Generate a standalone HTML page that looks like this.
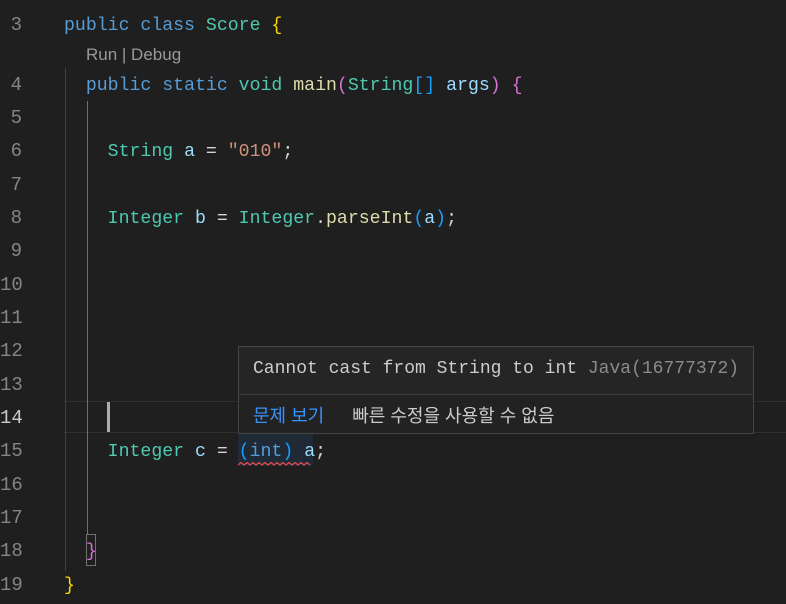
<!DOCTYPE html>
<html><head><meta charset="utf-8"><style>
body{margin:0;width:786px;height:604px;background:#1f1f1f;overflow:hidden;position:relative;font-family:"Liberation Mono","DejaVu Sans Mono",monospace;font-size:18.2px;color:#d4d4d4}
.ln{position:absolute;left:0;width:22px;text-align:right;color:#858585;font-size:19px;margin-top:3px}
.ln.cur{color:#cccccc}
.code{position:absolute;left:64px;white-space:pre;line-height:33px;margin-top:3px}
.k{color:#569cd6}.t{color:#4ec9b0}.f{color:#dcdcaa}.v{color:#9cdcfe}.s{color:#ce9178}.y{color:#ffd700}.p{color:#da70d6}.b{color:#179fff}
.g{position:absolute;width:1px;background:#404040}
</style></head><body>
<div style="position:absolute;left:64px;right:0;top:401px;height:30px;border-top:1px solid #2f2f2f;border-bottom:1px solid #2f2f2f"></div>
<div class="g" style="left:65px;top:68px;height:503px"></div>
<div class="g" style="left:87px;top:101px;height:434px;background:#707070"></div>
<div style="position:absolute;left:107px;top:402px;width:3px;height:30px;background:#aeafad"></div>
<div style="position:absolute;left:86px;top:534px;width:10px;height:32px;border:1px solid #707070;box-sizing:border-box"></div>
<div style="position:absolute;left:238px;top:434px;width:75px;height:32px;background:#1f2a36"></div>
<svg style="position:absolute;left:238px;top:462px" width="76" height="5"><path d="M0 3 l3 -2.5 l3 2.5 l3 -2.5 l3 2.5 l3 -2.5 l3 2.5 l3 -2.5 l3 2.5 l3 -2.5 l3 2.5 l3 -2.5 l3 2.5 l3 -2.5 l3 2.5 l3 -2.5 l3 2.5 l3 -2.5 l3 2.5 l3 -2.5 l3 2.5 l3 -2.5 l3 2.5 l3 -2.5 l3 2.5" stroke="#f14c4c" fill="none" stroke-width="1.2"/></svg>

<div class="ln" style="top:11px">3</div>
<div class="code" style="top:7px"><span class="k">public class</span> <span class="t">Score</span> <span class="y">{</span></div>
<div style="position:absolute;left:86px;top:45px;font-family:'Liberation Sans',sans-serif;font-size:17px;color:#999">Run | Debug</div>
<div class="ln" style="top:71px">4</div>
<div class="code" style="top:67px">  <span class="k">public static</span> <span class="t">void</span> <span class="f">main</span><span class="p">(</span><span class="t">String</span><span class="b">[]</span> <span class="v">args</span><span class="p">)</span> <span class="p">{</span></div>
<div class="ln" style="top:104px">5</div>
<div class="ln" style="top:137px">6</div>
<div class="code" style="top:133px">    <span class="t">String</span> <span class="v">a</span> = <span class="s">"010"</span>;</div>
<div class="ln" style="top:171px">7</div>
<div class="ln" style="top:204px">8</div>
<div class="code" style="top:200px">    <span class="t">Integer</span> <span class="v">b</span> = <span class="t">Integer</span>.<span class="f">parseInt</span><span class="b">(</span><span class="v">a</span><span class="b">)</span>;</div>
<div class="ln" style="top:237px">9</div>
<div class="ln" style="top:271px">10</div>
<div class="ln" style="top:304px">11</div>
<div class="ln" style="top:337px">12</div>
<div class="ln" style="top:371px">13</div>
<div class="ln cur" style="top:404px">14</div>
<div class="ln" style="top:437px">15</div>
<div class="code" style="top:433px">    <span class="t">Integer</span> <span class="v">c</span> = <span class="b">(</span><span class="k">int</span><span class="b">)</span> <span class="v">a</span>;</div>
<div class="ln" style="top:471px">16</div>
<div class="ln" style="top:504px">17</div>
<div class="ln" style="top:537px">18</div>
<div class="code" style="top:533px">  <span class="p">}</span></div>
<div class="ln" style="top:571px">19</div>
<div class="code" style="top:567px"><span class="y">}</span></div>

<div style="position:absolute;left:238px;top:346px;width:516px;height:88px;background:#252526;border:1px solid #454545;box-sizing:border-box">
<div style="position:absolute;left:14px;top:12px;white-space:pre;font-size:18px;color:#cccccc">Cannot cast from String to int <span style="color:#8b8b8b">Java(16777372)</span></div>
<div style="position:absolute;left:0;right:0;top:47px;height:1px;background:#3c3c3c"></div>
<div style="position:absolute;left:0;right:0;top:48px;bottom:0;background:#222222"></div>
<div style="position:absolute;left:14px;top:55px;font-family:'Liberation Sans','Noto Sans CJK KR',sans-serif;font-size:18px;color:#cccccc;white-space:pre"><span style="color:#3794ff">문제 보기</span><span style="display:inline-block;width:28px"></span>빠른 수정을 사용할 수 없음</div>
</div>
</body></html>
